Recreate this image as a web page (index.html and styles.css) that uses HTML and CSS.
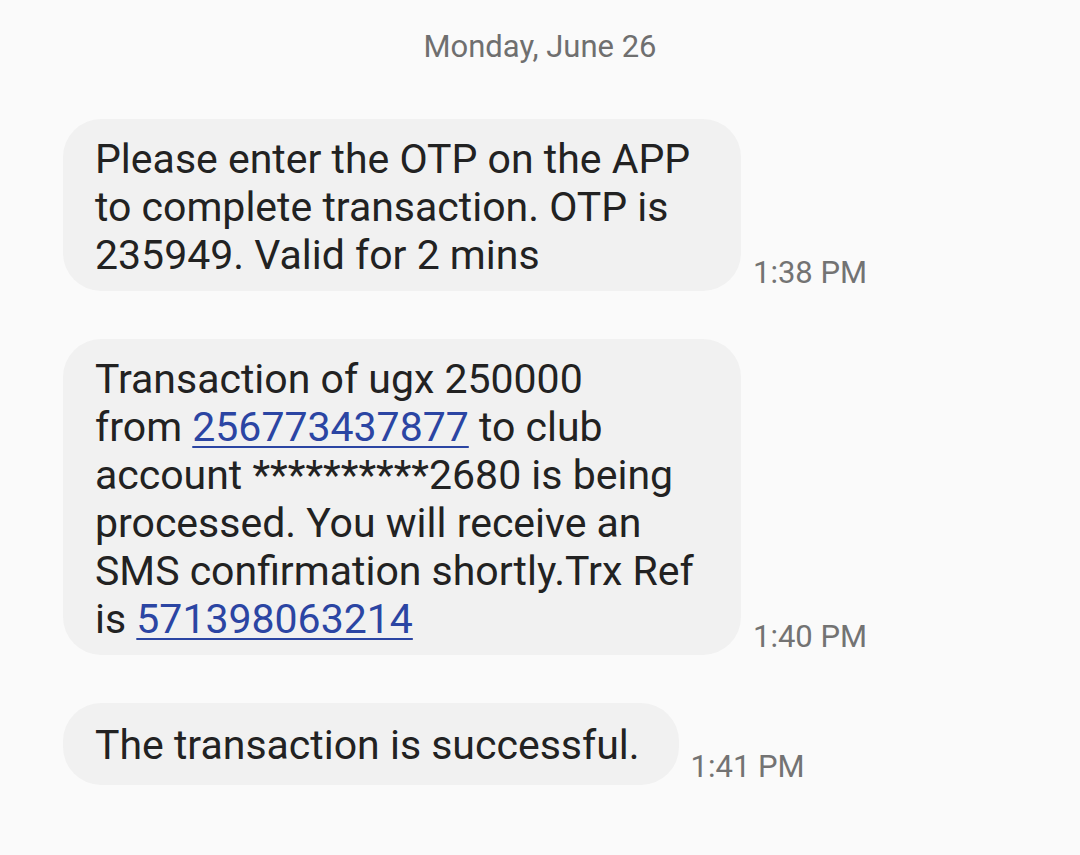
FILE: index.html
```html
<!DOCTYPE html>
<html>
<head>
<meta charset="utf-8">
<link rel="stylesheet" href="styles.css">
</head>
<body>
<div class="thread">
  <div class="date">Monday, June 26</div>
  <div class="row">
    <div class="bubble wide">Please enter the OTP on the APP<br>to complete transaction. OTP is<br>235949. Valid for 2 mins</div>
    <div class="time">1:38 PM</div>
  </div>
  <div class="row">
    <div class="bubble wide">Transaction of ugx 250000<br>from <a class="link" href="#">256773437877</a> to club<br>account **********2680 is being<br>processed. You will receive an<br>SMS confirmation shortly.Trx Ref<br>is <a class="link" href="#">571398063214</a></div>
    <div class="time">1:40 PM</div>
  </div>
  <div class="row">
    <div class="bubble short">The transaction is successful.</div>
    <div class="time">1:41 PM</div>
  </div>
</div>
</body>
</html>
```
FILE: styles.css
```css
html, body {
  margin: 0;
  padding: 0;
  background: #fafafa;
}
body {
  width: 1080px;
  height: 855px;
  overflow: hidden;
  font-family: Roboto, "Noto Sans", sans-serif;
}
.thread {
  display: flex;
  flex-direction: column;
  padding: 28px 0 0 63px;
  gap: 48px;
}
.date {
  text-align: center;
  width: 954px;
  font-size: 31px;
  line-height: 38px;
  color: #6f6f6f;
  margin-bottom: 5px;
}
.row {
  display: flex;
  align-items: flex-end;
  gap: 12px;
}
.bubble {
  background: #f1f1f1;
  color: #222222;
  font-size: 41px;
  line-height: 48px;
  border-radius: 38px;
  padding: 16px 20px 12px 32px;
}
.bubble.wide {
  width: 626px;
}
.bubble.short {
  padding: 18px 39px 16px 32px;
}
.link {
  color: #2b45a3;
  text-decoration: underline;
  text-decoration-thickness: 2px;
  text-underline-offset: 5px;
}
.time {
  font-size: 31px;
  line-height: 34px;
  color: #737373;
  margin-bottom: 1px;
}
```
